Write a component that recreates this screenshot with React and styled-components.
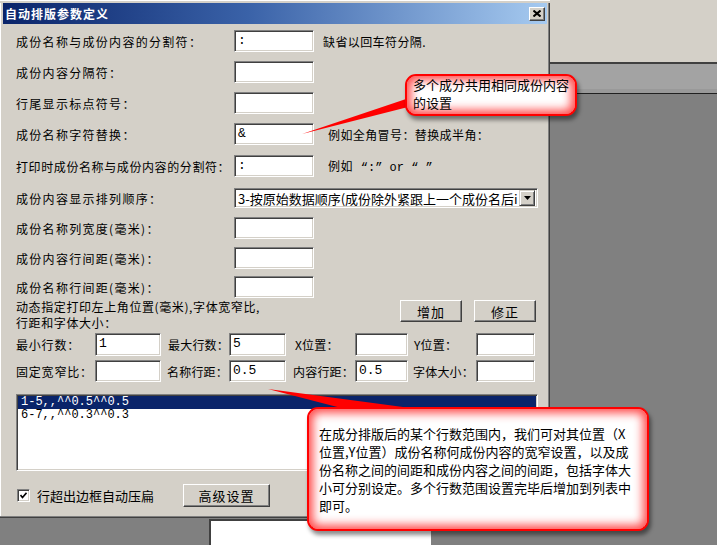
import React from 'react'
import styled, { createGlobalStyle } from 'styled-components'

const GlobalStyle = createGlobalStyle`
  html, body {
    margin: 0;
    padding: 0;
    background: #808080;
  }
  body {
    font-family: "Noto Sans CJK SC", "Liberation Sans", sans-serif;
  }
`

const Screen = styled.div`
  position: relative;
  width: 717px;
  height: 545px;
  overflow: hidden;
  display: flex;
  background: #808080;
  font-size: 12px;
  color: #000;
`

const LeftColumn = styled.div`
  width: 550px;
  display: flex;
  flex-direction: column;
`

const TopStrip = styled.div`
  height: 2px;
  background: #d4d0c8;
  border-top: 1px solid #fff;
`

const Dialog = styled.div`
  height: 515px;
  box-sizing: border-box;
  background: #d4d0c8;
  border-right: 1px solid #404040;
  border-bottom: 1px solid #404040;
  box-shadow: inset -1px -1px #808080, inset 1px 0 #fff;
  padding: 0 2px 0 3px;
  display: flex;
  flex-direction: column;
`

const TitleBar = styled.div`
  height: 21px;
  display: flex;
  align-items: center;
  justify-content: space-between;
  padding: 0 2px 0 2px;
  background: linear-gradient(90deg, #0a246a 0%, #3a62a8 45%, #a6caf0 100%);
`

const TitleText = styled.span`
  color: #fff;
  font-weight: bold;
  font-size: 12px;
  letter-spacing: 1px;
`

const CloseButton = styled.div`
  width: 16px;
  height: 14px;
  box-sizing: border-box;
  background: #d4d0c8;
  border-top: 1px solid #fff;
  border-left: 1px solid #fff;
  border-right: 1px solid #404040;
  border-bottom: 1px solid #404040;
  box-shadow: inset -1px -1px #808080;
  display: flex;
  align-items: center;
  justify-content: center;
`

const Body = styled.div`
  flex: 1;
  display: flex;
  flex-direction: column;
  padding: 6px 9px 0 13px;
`

const FieldRow = styled.div`
  display: flex;
  align-items: center;
  height: ${p => p.$h || 22}px;
  margin-bottom: ${p => p.$mb || 0}px;
`

const Label = styled.span`
  width: ${p => p.$w || 218}px;
  flex-shrink: 0;
  letter-spacing: ${p => p.$ls ?? 1.3}px;
  white-space: nowrap;
  padding-top: 1px;
`

const Extra = styled.span`
  margin-left: ${p => p.$ml || 14}px;
  letter-spacing: 0.4px;
  white-space: nowrap;
`

const Mono = styled.span`
  font-family: "Liberation Mono", "DejaVu Sans Mono", monospace;
  font-size: 12px;
  margin-left: 8px;
  letter-spacing: 0;
`

const TextBox = styled.div`
  width: ${p => p.$w || 80}px;
  height: ${p => p.$h || 22}px;
  box-sizing: border-box;
  flex-shrink: 0;
  background: #fff;
  border-top: 1px solid #808080;
  border-left: 1px solid #808080;
  border-right: 1px solid #fff;
  border-bottom: 1px solid #fff;
  box-shadow: inset 1px 1px #404040, inset -1px -1px #d4d0c8;
  padding: 2px 0 0 3px;
  font-family: "Liberation Mono", "DejaVu Sans Mono", monospace;
  font-size: 13px;
  line-height: 16px;
  overflow: hidden;
  white-space: nowrap;
`

const Select = styled.div`
  width: 304px;
  height: 20px;
  box-sizing: border-box;
  background: #fff;
  border-top: 1px solid #808080;
  border-left: 1px solid #808080;
  border-right: 1px solid #fff;
  border-bottom: 1px solid #fff;
  box-shadow: inset 1px 1px #404040, inset -1px -1px #d4d0c8;
  display: flex;
  align-items: center;
  padding: 0 2px 0 3px;
`

const SelectText = styled.span`
  flex: 1;
  white-space: nowrap;
  font-size: 13px;
  letter-spacing: 0;
`

const DropButton = styled.div`
  width: 16px;
  height: 16px;
  box-sizing: border-box;
  flex-shrink: 0;
  background: #d4d0c8;
  border-top: 1px solid #d4d0c8;
  border-left: 1px solid #d4d0c8;
  border-right: 1px solid #404040;
  border-bottom: 1px solid #404040;
  box-shadow: inset 1px 1px #fff, inset -1px -1px #808080;
  display: flex;
  align-items: center;
  justify-content: center;
`

const DynRow = styled.div`
  display: flex;
  justify-content: space-between;
  height: 33px;
`

const DynText = styled.div`
  line-height: 16px;
  padding-top: 1px;
  letter-spacing: 0.6px;
`

const ButtonGroup = styled.div`
  display: flex;
  gap: 12px;
  padding-top: 2px;
  margin-right: 2px;
`

const Button = styled.div`
  width: ${p => p.$w || 62}px;
  height: ${p => p.$h || 22}px;
  box-sizing: border-box;
  background: #d4d0c8;
  border-top: 1px solid #fff;
  border-left: 1px solid #fff;
  border-right: 1px solid #404040;
  border-bottom: 1px solid #404040;
  box-shadow: inset -1px -1px #808080;
  display: flex;
  align-items: center;
  justify-content: center;
  font-size: 13px;
  letter-spacing: 1px;
`

const ParamGrid = styled.div`
  display: grid;
  grid-template-columns: 79px 66px 68px 57px 69px 53px 68px 59px;
  grid-template-rows: 23px 22px;
  row-gap: 4px;
  align-items: center;
  margin-top: 2px;
`

const GridLabel = styled.span`
  padding-left: ${p => p.$pl || 0}px;
  white-space: nowrap;
  letter-spacing: ${p => p.$ls ?? 0.2}px;
  font-size: 12px;
`

const ListBox = styled.div`
  margin-top: 12px;
  width: 522px;
  height: 77px;
  box-sizing: border-box;
  background: #fff;
  border-top: 1px solid #808080;
  border-left: 1px solid #808080;
  border-right: 1px solid #fff;
  border-bottom: 1px solid #fff;
  box-shadow: inset 1px 1px #404040, inset -1px -1px #d4d0c8;
  padding: 1px 1px 0 1px;
`

const ListItem = styled.div`
  height: 13px;
  line-height: 13px;
  padding-left: 3px;
  font-family: "Liberation Mono", "DejaVu Sans Mono", monospace;
  font-size: 12px;
  background: ${p => (p.$selected ? '#0a246a' : 'transparent')};
  color: ${p => (p.$selected ? '#fff' : '#000')};
`

const BottomRow = styled.div`
  display: flex;
  align-items: center;
  margin-top: 13px;
  height: 23px;
`

const CheckField = styled.div`
  width: 167px;
  display: flex;
  align-items: center;
`

const CheckBox = styled.div`
  width: 13px;
  height: 13px;
  box-sizing: border-box;
  margin-left: 1px;
  background: #fff;
  border-top: 1px solid #808080;
  border-left: 1px solid #808080;
  border-right: 1px solid #fff;
  border-bottom: 1px solid #fff;
  box-shadow: inset 1px 1px #404040, inset -1px -1px #d4d0c8;
  display: flex;
  align-items: center;
  justify-content: center;
`

const CheckLabel = styled.span`
  margin-left: 7px;
  font-size: 13px;
  letter-spacing: 0;
`

const Below = styled.div`
  flex: 1;
  background: #808080;
  padding: 1px 0 0 209px;
  display: flex;
`

const BackWindow = styled.div`
  width: 220px;
  background: #fff;
  border-top: 2px solid #404040;
  border-left: 2px solid #404040;
`

const Desktop = styled.div`
  flex: 1;
  display: flex;
  flex-direction: column;
  background: #808080;
`

const DeskPanel = styled.div`
  height: ${p => p.$h}px;
  background: ${p => p.$bg};
  flex-shrink: 0;
`

const Pointers = styled.svg`
  position: absolute;
  left: 0;
  top: 0;
  pointer-events: none;
`

const Callout = styled.div`
  position: absolute;
  left: ${p => p.$x}px;
  top: ${p => p.$y}px;
  width: ${p => p.$w}px;
  height: ${p => p.$h}px;
  box-sizing: border-box;
  padding: ${p => p.$pad};
  background: #fff;
  border: 2px solid #f00;
  border-radius: 11px;
  box-shadow: inset 0 0 10px 4px rgba(255, 30, 30, 0.8), 2px 4px 4px rgba(0, 0, 0, 0.45);
  font-size: 13px;
  color: #000;
`

const CalloutLine = styled.div`
  white-space: nowrap;
  height: ${p => p.$lh}px;
  line-height: ${p => p.$lh}px;
`

const fields = [
  { label: '成份名称与成份内容的分割符：', value: ':', mb: 9, extra: <Extra $ml={9}>缺省以回车符分隔.</Extra> },
  { label: '成份内容分隔符：', mb: 9 },
  { label: '行尾显示标点符号：', mb: 9 },
  { label: '成份名称字符替换：', value: '&', mb: 10, extra: <Extra>例如全角冒号：替换成半角：</Extra> },
  {
    label: '打印时成份名称与成份内容的分割符：',
    ls: 0.6,
    value: ':',
    mb: 11,
    extra: (
      <Extra>
        例如<Mono>“:” or “ ”</Mono>
      </Extra>
    )
  }
]

const sizeFields = [
  { label: '成份名称列宽度(毫米)：', mb: 8 },
  { label: '成份内容行间距(毫米)：', mb: 7 },
  { label: '成份名称行间距(毫米)：', mb: 0 }
]

const calloutLines = [
  '在成分排版后的某个行数范围内，我们可对其位置（X',
  '位置,Y位置）成份名称何成份内容的宽窄设置，以及成',
  '份名称之间的间距和成份内容之间的间距，包括字体大',
  '小可分别设定。多个行数范围设置完毕后增加到列表中',
  '即可。'
]

const listRows = ['1-5,,^^0.5^^0.5', '6-7,,^^0.3^^0.3']

export default function App() {
  return (
    <Screen>
      <GlobalStyle />
      <LeftColumn>
        <TopStrip />
        <Dialog>
          <TitleBar>
            <TitleText>自动排版参数定义</TitleText>
            <CloseButton>
              <svg width="8" height="7" viewBox="0 0 8 7">
                <path d="M0.5 0.5 L7.5 6.5 M7.5 0.5 L0.5 6.5" stroke="#000" strokeWidth="2" />
              </svg>
            </CloseButton>
          </TitleBar>
          <Body>
            {fields.map(f => (
              <FieldRow key={f.label} $mb={f.mb}>
                <Label $ls={f.ls}>{f.label}</Label>
                <TextBox>{f.value}</TextBox>
                {f.extra}
              </FieldRow>
            ))}
            <FieldRow $h={20} $mb={9}>
              <Label>成份内容显示排列顺序：</Label>
              <Select>
                <SelectText>3-按原始数据顺序(成份除外紧跟上一个成份名后i</SelectText>
                <DropButton>
                  <svg width="7" height="4" viewBox="0 0 7 4">
                    <path d="M0 0 H7 L3.5 4 Z" fill="#000" />
                  </svg>
                </DropButton>
              </Select>
            </FieldRow>
            {sizeFields.map(f => (
              <FieldRow key={f.label} $mb={f.mb}>
                <Label>{f.label}</Label>
                <TextBox />
              </FieldRow>
            ))}
            <DynRow>
              <DynText>
                动态指定打印左上角位置(毫米),字体宽窄比,
                <br />
                行距和字体大小：
              </DynText>
              <ButtonGroup>
                <Button>增加</Button>
                <Button>修正</Button>
              </ButtonGroup>
            </DynRow>
            <ParamGrid>
              <GridLabel $ls={0.8}>最小行数：</GridLabel>
              <TextBox $w={66} $h={23}>1</TextBox>
              <GridLabel $pl={7}>最大行数：</GridLabel>
              <TextBox $w={57} $h={23}>5</TextBox>
              <GridLabel $pl={9}>X位置：</GridLabel>
              <TextBox $w={53} $h={23} />
              <GridLabel $pl={6}>Y位置：</GridLabel>
              <TextBox $w={59} $h={23} />
              <GridLabel $ls={0.8}>固定宽窄比：</GridLabel>
              <TextBox $w={66} />
              <GridLabel $pl={6}>名称行距：</GridLabel>
              <TextBox $w={57}>0.5</TextBox>
              <GridLabel $pl={7}>内容行距：</GridLabel>
              <TextBox $w={53}>0.5</TextBox>
              <GridLabel $pl={5}>字体大小：</GridLabel>
              <TextBox $w={59} />
            </ParamGrid>
            <ListBox>
              {listRows.map((r, i) => (
                <ListItem key={r} $selected={i === 0}>
                  {r}
                </ListItem>
              ))}
            </ListBox>
            <BottomRow>
              <CheckField>
                <CheckBox>
                  <svg width="7" height="7" viewBox="0 0 7 7">
                    <path d="M0.5 3 L2.5 5.5 L6.5 0.8" stroke="#000" strokeWidth="1.6" fill="none" />
                  </svg>
                </CheckBox>
                <CheckLabel>行超出边框自动压扁</CheckLabel>
              </CheckField>
              <Button $w={87} $h={23}>高级设置</Button>
            </BottomRow>
          </Body>
        </Dialog>
        <Below>
          <BackWindow />
        </Below>
      </LeftColumn>
      <Desktop>
        <DeskPanel $h={62} $bg="#d4d0c8" />
        <DeskPanel $h={2} $bg="#404040" />
        <DeskPanel $h={25} $bg="#a3a3a3" />
        <DeskPanel $h={4} $bg="#999999" />
        <DeskPanel $h={1} $bg="#202020" />
      </Desktop>
      <Pointers width="717" height="545" viewBox="0 0 717 545">
        <polygon points="302,134 412,97 412,106" fill="#f00" />
        <polygon points="268,389 418,409 345,409" fill="#f00" />
      </Pointers>
      <Callout $x={405} $y={74} $w={172} $h={42} $pad="0 4px 0 6px">
        <CalloutLine $lh={18}>多个成分共用相同成份内容</CalloutLine>
        <CalloutLine $lh={18}>的设置</CalloutLine>
      </Callout>
      <Callout $x={307} $y={407} $w={342} $h={124} $pad="16px 6px 0 10px">
        {calloutLines.map(l => (
          <CalloutLine key={l} $lh={18}>
            {l}
          </CalloutLine>
        ))}
      </Callout>
    </Screen>
  )
}
